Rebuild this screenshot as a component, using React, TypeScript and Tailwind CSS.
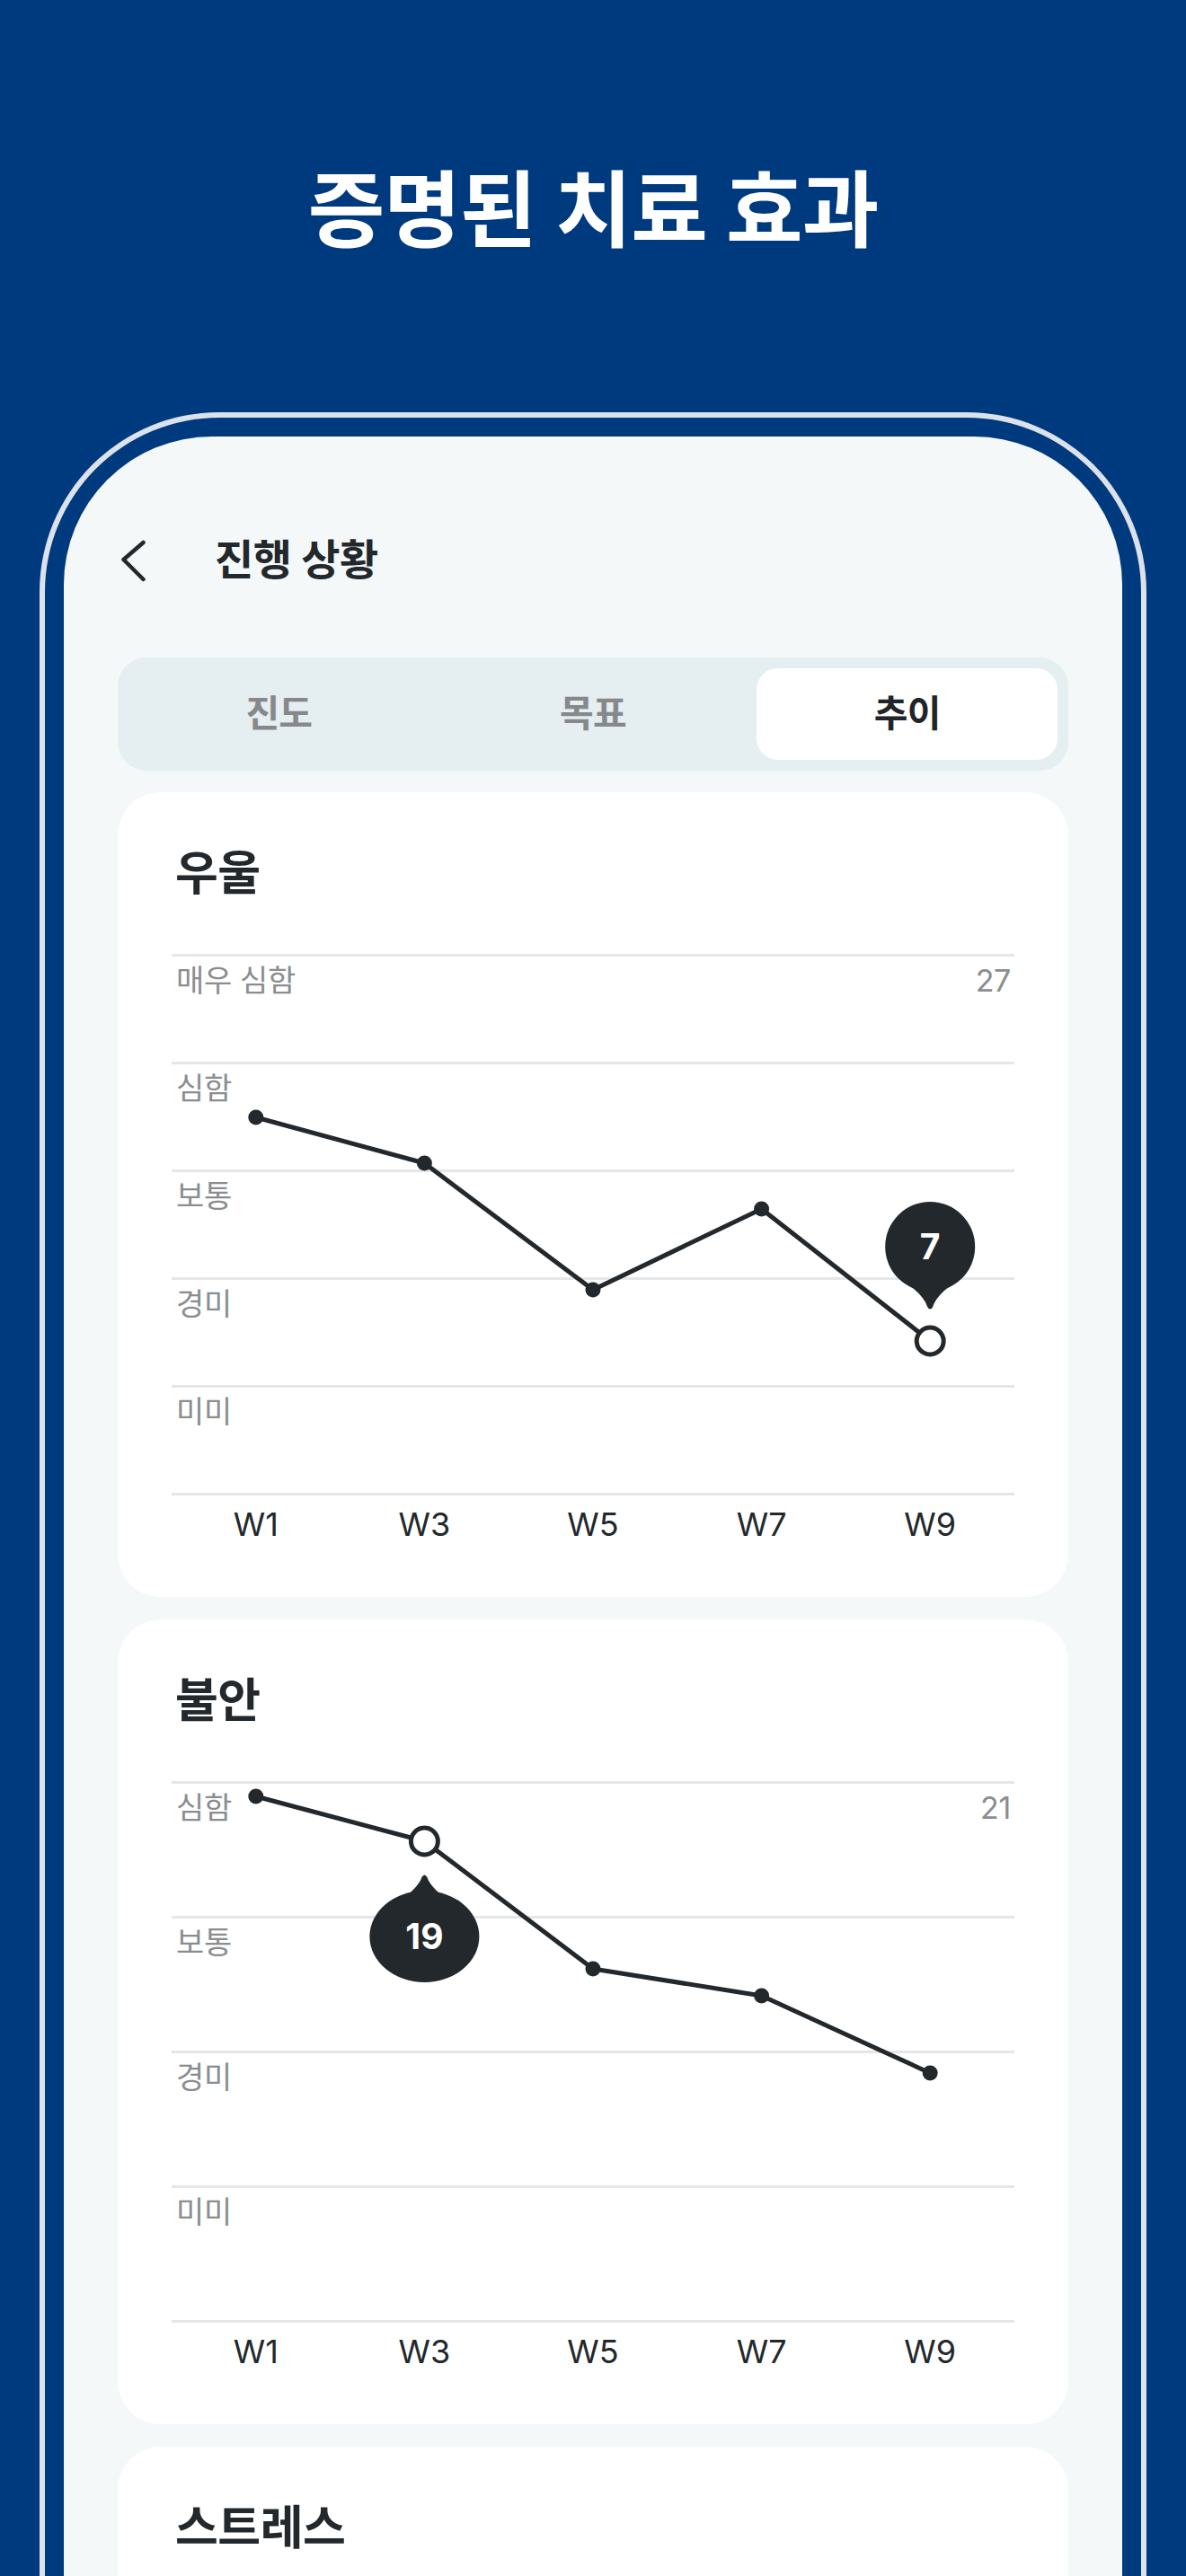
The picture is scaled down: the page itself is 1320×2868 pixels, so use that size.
import React from 'react';

type Bubble = { index: number; value: string; cy: number; rx: number; ry: number; dir: 'up' | 'down' };

type Chart = {
  title: string;
  max: string;
  labels: string[];
  band: number;
  points: number[]; // y offset from grid top, px
  selected: number;
  bubble: Bubble;
};

const weeks = ['W1', 'W3', 'W5', 'W7', 'W9'];
const GRID_W = 938;
const colX = (i: number) => GRID_W / 10 + (GRID_W / 5) * i;

const charts: Chart[] = [
  {
    title: '우울',
    max: '27',
    labels: ['매우 심함', '심함', '보통', '경미', '미미'],
    band: 120,
    points: [182, 233, 374, 284, 431],
    selected: 4,
    bubble: { index: 4, value: '7', cy: 326, rx: 50, ry: 50, dir: 'down' },
  },
  {
    title: '불안',
    max: '21',
    labels: ['심함', '보통', '경미', '미미'],
    band: 150,
    points: [17, 67, 209, 239, 325],
    selected: 1,
    bubble: { index: 1, value: '19', cy: 173, rx: 61, ry: 51, dir: 'up' },
  },
];

const INK = '#22282b';

const TrendCard = ({ chart }: { chart: Chart }) => {
  const h = chart.labels.length * chart.band + 3;
  const path = chart.points.map((y, i) => `${i === 0 ? 'M' : 'L'}${colX(i)} ${y}`).join(' ');
  const b = chart.bubble;
  const bx = colX(b.index);
  const tail =
    b.dir === 'down'
      ? `M${bx - 24} ${b.cy + 42} Q${bx - 6} ${b.cy + 56} ${bx - 3} ${b.cy + 67} Q${bx} ${b.cy + 72} ${bx + 3} ${b.cy + 67} Q${bx + 6} ${b.cy + 56} ${bx + 24} ${b.cy + 42} Z`
      : `M${bx - 24} ${b.cy - 42} Q${bx - 6} ${b.cy - 56} ${bx - 3} ${b.cy - 66} Q${bx} ${b.cy - 71} ${bx + 3} ${b.cy - 66} Q${bx + 6} ${b.cy - 56} ${bx + 24} ${b.cy - 42} Z`;

  return (
    <div className="rounded-[48px] bg-white px-[60px] pt-[63px] pb-[61px]">
      <h2 className="ml-[4px] text-[52px] leading-[56px] font-bold tracking-[-0.01em] text-[#22282b]">{chart.title}</h2>

      <div className="relative mt-[61px] border-b-[3px] border-[#e4e6e8]">
        {chart.labels.map((label, i) => (
          <div
            key={label}
            className="flex justify-between border-t-[3px] border-[#e4e6e8] pl-[5px] pr-[4px] pt-[7px] text-[34px] leading-[40px] tracking-[-0.01em] text-[#8a8d90]"
            style={{ height: chart.band }}
          >
            <span>{label}</span>
            {i === 0 && <span>{chart.max}</span>}
          </div>
        ))}

        <svg className="absolute left-0 top-0" width={GRID_W} height={h} viewBox={`0 0 ${GRID_W} ${h}`}>
          <path d={path} fill="none" stroke={INK} strokeWidth={5} strokeLinejoin="round" />
          {chart.points.map((y, i) =>
            i === chart.selected ? (
              <circle key={i} cx={colX(i)} cy={y} r={15} fill="#fff" stroke={INK} strokeWidth={5} />
            ) : (
              <circle key={i} cx={colX(i)} cy={y} r={8.5} fill={INK} />
            )
          )}
          <path d={tail} fill={INK} />
          <ellipse cx={bx} cy={b.cy} rx={b.rx} ry={b.ry} fill={INK} />
          <text
            x={bx}
            y={b.cy + 14}
            textAnchor="middle"
            fill="#fff"
            fontSize={39}
            fontWeight={700}
            fontFamily="Inter, 'Noto Sans CJK KR', sans-serif"
          >
            {b.value}
          </text>
        </svg>
      </div>

      <div className="mt-[12px] grid grid-cols-5 text-center text-[36px] leading-[40px] text-[#22282b]">
        {weeks.map((w) => (
          <span key={w}>{w}</span>
        ))}
      </div>
    </div>
  );
};

export default function App() {
  const tabs = ['진도', '목표', '추이'];

  return (
    <div className="h-[2868px] w-[1320px] overflow-hidden bg-[#003a7e] font-[Inter,'Noto_Sans_CJK_KR',sans-serif]">
      <h1 className="pt-[182px] text-center text-[93px] leading-[104px] font-bold tracking-[-0.01em] text-white">
        증명된 치료 효과
      </h1>

      {/* phone frame */}
      <div className="mx-[44px] mt-[173px] h-[2600px] rounded-t-[200px] border-[6px] border-b-0 border-[#dce2ea] px-[21px] pt-[21px]">
        <div className="h-full rounded-t-[165px] bg-[#f4f8f9] px-[60px] pt-[107px]">
          {/* header */}
          <div className="flex h-[60px] items-center">
            <svg width="36" height="50" viewBox="0 0 36 50" fill="none">
              <path d="M28.5 6 L6.5 25 L28.5 47" stroke={INK} strokeWidth={4.5} strokeLinecap="round" strokeLinejoin="round" />
            </svg>
            <span className="ml-[72px] text-[47px] font-bold tracking-[-0.01em] text-[#22282b]">진행 상황</span>
          </div>

          {/* segmented tabs */}
          <div className="mt-[79px] flex h-[126px] gap-[15px] rounded-[32px] bg-[#e5eef1] p-[12px]">
            {tabs.map((t, i) => (
              <div
                key={t}
                className={
                  i === 2
                    ? 'flex flex-1 items-center justify-center rounded-[24px] bg-white text-[41px] font-semibold tracking-[-0.02em] text-[#1f2528]'
                    : 'flex flex-1 items-center justify-center text-[41px] font-semibold tracking-[-0.02em] text-[#86898c]'
                }
              >
                {t}
              </div>
            ))}
          </div>

          {/* cards */}
          <div className="mt-[24px] flex flex-col gap-[25px]">
            {charts.map((c) => (
              <TrendCard key={c.title} chart={c} />
            ))}
            <div className="h-[300px] rounded-[48px] bg-white px-[60px] pt-[63px]">
              <h2 className="ml-[4px] text-[52px] leading-[56px] font-bold tracking-[-0.01em] text-[#22282b]">스트레스</h2>
            </div>
          </div>
        </div>
      </div>
    </div>
  );
}
